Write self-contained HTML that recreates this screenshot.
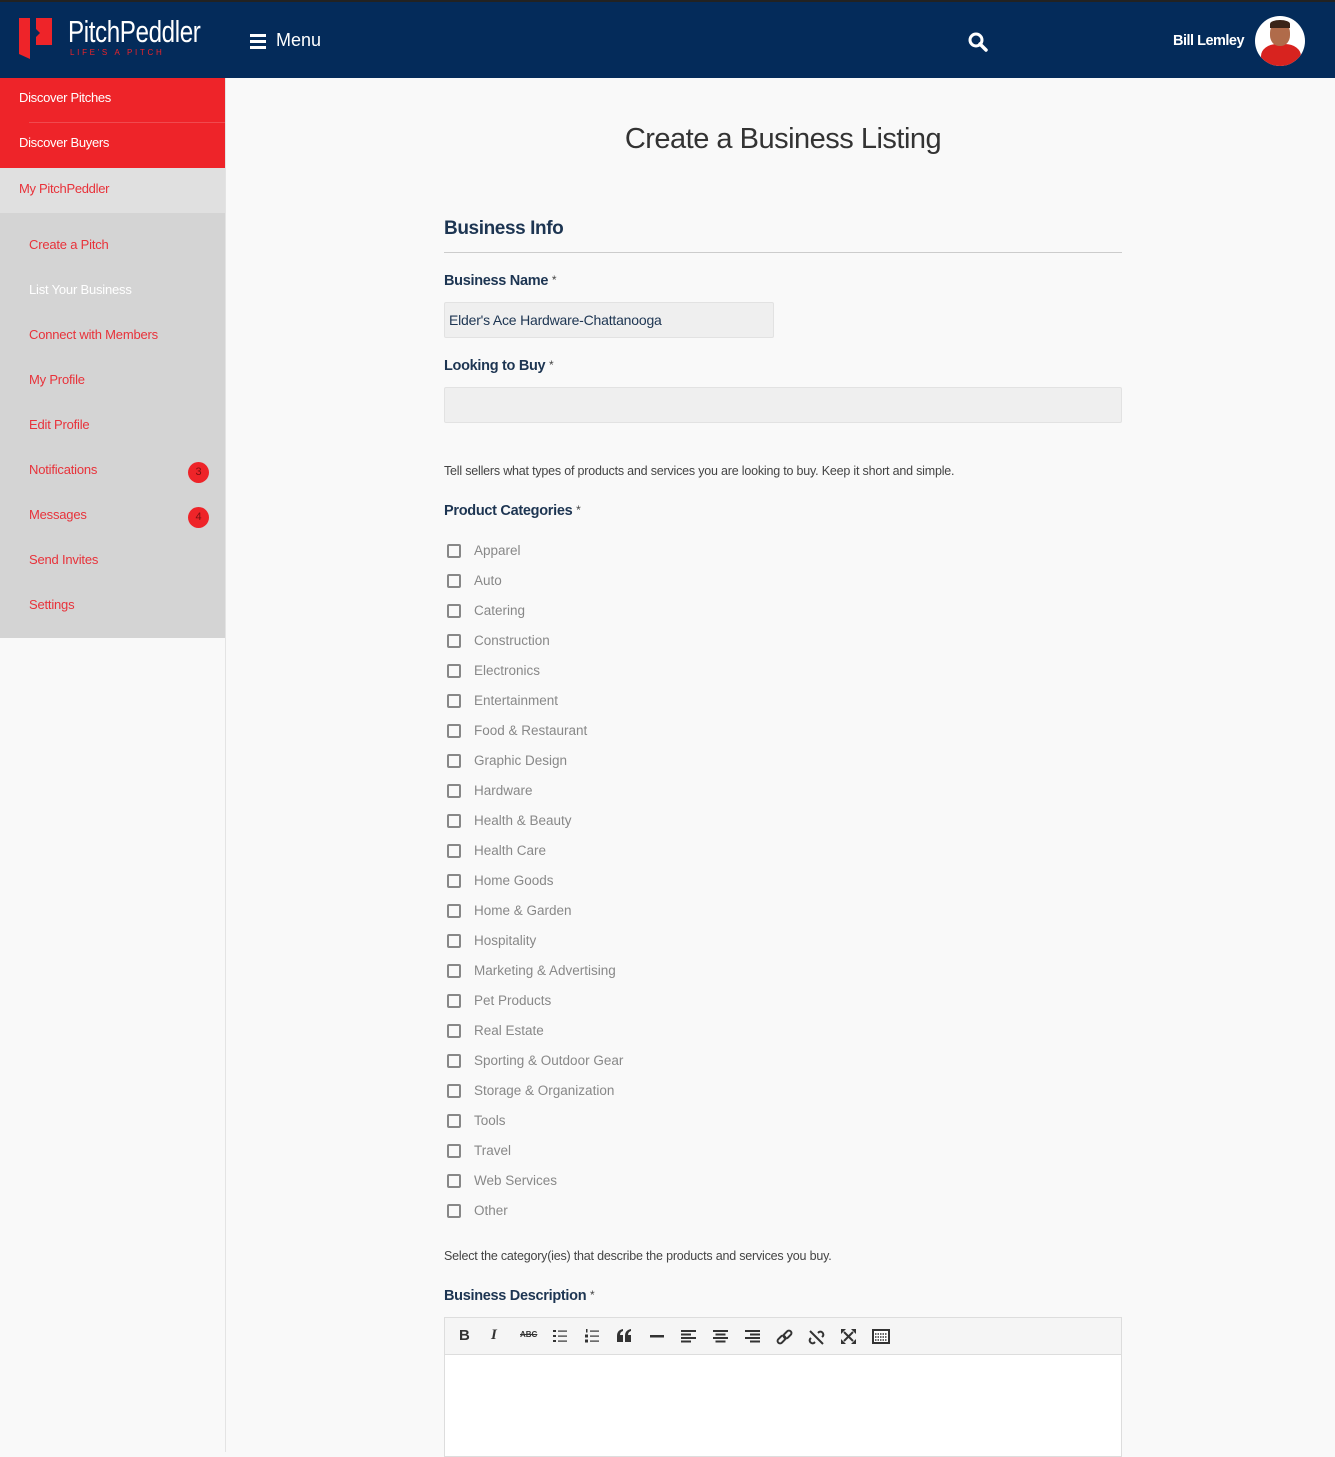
<!DOCTYPE html>
<html><head><meta charset="utf-8"><style>
*{box-sizing:border-box;margin:0;padding:0}
body{width:1335px;height:1452px;overflow:hidden;background:#f9f9f9;font-family:"Liberation Sans",sans-serif;position:relative}
.hdr{position:absolute;left:0;top:0;width:1335px;height:78px;background:#042b5a;border-top:2px solid #222}
.side{position:absolute;left:0;top:78px;width:226px;height:1374px;border-right:1px solid #e4e4e4;background:#f9f9f9}
.red{background:#ee2429;color:#fff;font-size:13px;height:45px;line-height:39px;padding-left:19px;position:relative;letter-spacing:-0.3px}
.red.a:after{content:"";position:absolute;left:29px;right:0;bottom:0;height:1px;background:#f04a4e}
.my{background:#e0e0e0;color:#e8323a;font-size:13px;height:45px;line-height:42px;padding-left:19px;letter-spacing:-0.3px}
.sub{background:#d4d4d4;height:425px;padding-top:9px}
.sub div{height:45px;line-height:45px;padding-left:29px;color:#e8323a;font-size:13px;position:relative;letter-spacing:-0.2px}
.sub div.w{color:#fff}
.badge{position:absolute;left:188px;top:15px;width:21px;height:21px;border-radius:50%;background:#ee2429;color:#7a1010;font-size:11px;line-height:21px;text-align:center}
h1{position:absolute;left:226px;width:1114px;top:123px;text-align:center;font-weight:normal;font-size:29px;color:#333;letter-spacing:-0.5px}
.main{position:absolute;left:444px;width:678px;top:0}
.lbl{position:absolute;font-weight:bold;font-size:14.5px;color:#1d3552;letter-spacing:-0.3px}
.lbl span{color:#444;font-weight:normal;font-size:12px;vertical-align:top}
.inp{position:absolute;background:#efefef;border:1px solid #e2e2e2;border-radius:2px;height:36px}
.help{position:absolute;font-size:12.5px;color:#444;letter-spacing:-0.2px}
.cb{position:absolute;left:3px;font-size:13.5px;color:#888}
.cb i{position:absolute;left:0;top:1px;width:14px;height:14px;border:2px solid #888;border-radius:2px}
.cb b{font-weight:normal;position:absolute;left:27px;top:0;white-space:nowrap}
.tb svg{position:absolute;top:11px}
</style></head><body>
<div class="hdr">
<svg style="position:absolute;left:19px;top:15px" width="34" height="42" viewBox="0 0 34 42"><path d="M0 1h11v41L0 37z" fill="#ee2429"/><path d="M17 1h16v27H17v-8l4-4-4-4z" fill="#ee2429"/></svg>
<div style="position:absolute;left:68px;top:12px;color:#fff;font-size:31px;letter-spacing:-0.5px;transform:scaleX(0.78);transform-origin:left">PitchPeddler</div>
<div style="position:absolute;left:70px;top:46px;color:#ee2429;font-size:8px;letter-spacing:2.7px">LIFE'S A PITCH</div>
<div style="position:absolute;left:250px;top:32px;width:16px"><div style="height:3px;background:#fff;margin-bottom:3px"></div><div style="height:3px;background:#fff;margin-bottom:3px"></div><div style="height:3px;background:#fff"></div></div>
<div style="position:absolute;left:276px;top:28px;color:#fff;font-size:18px">Menu</div>
<svg style="position:absolute;left:968px;top:30px" width="20" height="20" viewBox="0 0 20 20"><circle cx="8" cy="8" r="6" stroke="#fff" stroke-width="3" fill="none"/><path d="M12 12l6 6" stroke="#fff" stroke-width="3.5" stroke-linecap="round"/></svg>
<div style="position:absolute;left:1173px;top:31px;color:#fff;font-size:14.5px;font-weight:bold;letter-spacing:-0.5px">Bill Lemley</div>
<div style="position:absolute;left:1255px;top:14px;width:50px;height:50px;border-radius:50%;background:#fff;overflow:hidden"><div style="position:absolute;left:6px;top:28px;width:40px;height:30px;border-radius:40% 40% 0 0;background:#d8231f"></div><div style="position:absolute;left:15px;top:6px;width:20px;height:24px;border-radius:45%;background:#b06b4a"></div><div style="position:absolute;left:15px;top:4px;width:20px;height:8px;border-radius:50% 50% 0 0;background:#3a2418"></div></div>
</div>
<div class="side">
<div class="red a">Discover Pitches</div>
<div class="red">Discover Buyers</div>
<div class="my">My PitchPeddler</div>
<div class="sub">
<div>Create a Pitch</div><div class="w">List Your Business</div><div>Connect with Members</div><div>My Profile</div><div>Edit Profile</div>
<div>Notifications<span class="badge">3</span></div><div>Messages<span class="badge">4</span></div><div>Send Invites</div><div>Settings</div>
</div></div>
<h1>Create a Business Listing</h1>
<div class="main">
<div style="position:absolute;top:218px;font-size:19px;font-weight:bold;color:#1d3552;letter-spacing:-0.4px">Business Info</div>
<div style="position:absolute;top:252px;width:678px;height:1px;background:#ccc"></div>
<div class="lbl" style="top:273px">Business Name <span>*</span></div>
<div class="inp" style="top:302px;width:330px;font-size:14px;color:#1d3552;padding:9px 4px;letter-spacing:-0.2px">Elder's Ace Hardware-Chattanooga</div>
<div class="lbl" style="top:358px">Looking to Buy <span>*</span></div>
<div class="inp" style="top:387px;width:678px"></div>
<div class="help" style="top:464px">Tell sellers what types of products and services you are looking to buy. Keep it short and simple.</div>
<div class="lbl" style="top:503px">Product Categories <span>*</span></div>
<div class="cb" style="top:543px"><i></i><b>Apparel</b></div>
<div class="cb" style="top:573px"><i></i><b>Auto</b></div>
<div class="cb" style="top:603px"><i></i><b>Catering</b></div>
<div class="cb" style="top:633px"><i></i><b>Construction</b></div>
<div class="cb" style="top:663px"><i></i><b>Electronics</b></div>
<div class="cb" style="top:693px"><i></i><b>Entertainment</b></div>
<div class="cb" style="top:723px"><i></i><b>Food &amp; Restaurant</b></div>
<div class="cb" style="top:753px"><i></i><b>Graphic Design</b></div>
<div class="cb" style="top:783px"><i></i><b>Hardware</b></div>
<div class="cb" style="top:813px"><i></i><b>Health &amp; Beauty</b></div>
<div class="cb" style="top:843px"><i></i><b>Health Care</b></div>
<div class="cb" style="top:873px"><i></i><b>Home Goods</b></div>
<div class="cb" style="top:903px"><i></i><b>Home &amp; Garden</b></div>
<div class="cb" style="top:933px"><i></i><b>Hospitality</b></div>
<div class="cb" style="top:963px"><i></i><b>Marketing &amp; Advertising</b></div>
<div class="cb" style="top:993px"><i></i><b>Pet Products</b></div>
<div class="cb" style="top:1023px"><i></i><b>Real Estate</b></div>
<div class="cb" style="top:1053px"><i></i><b>Sporting &amp; Outdoor Gear</b></div>
<div class="cb" style="top:1083px"><i></i><b>Storage &amp; Organization</b></div>
<div class="cb" style="top:1113px"><i></i><b>Tools</b></div>
<div class="cb" style="top:1143px"><i></i><b>Travel</b></div>
<div class="cb" style="top:1173px"><i></i><b>Web Services</b></div>
<div class="cb" style="top:1203px"><i></i><b>Other</b></div>
<div class="help" style="top:1249px">Select the category(ies) that describe the products and services you buy.</div>
<div class="lbl" style="top:1288px">Business Description <span>*</span></div>
<div style="position:absolute;top:1317px;width:678px;height:140px;border:1px solid #ddd;background:#fff">
<div class="tb" style="height:37px;background:#f5f5f5;border-bottom:1px solid #ddd;position:relative;color:#333">
<span style="position:absolute;left:14px;top:9px;font-weight:bold;font-size:15px">B</span>
<span style="position:absolute;left:46px;top:9px;font-style:italic;font-weight:bold;font-size:15px;font-family:'Liberation Serif',serif">I</span>
<span style="position:absolute;left:75px;top:12px;font-size:8px;font-weight:bold;text-decoration:line-through">ABC</span>
<svg style="left:108px" width="14" height="14" viewBox="0 0 14 14" fill="#333"><rect x="0" y="1" width="3" height="2"/><rect x="0" y="6" width="3" height="2"/><rect x="0" y="11" width="3" height="2"/><rect x="5" y="1.5" width="9" height="1.2"/><rect x="5" y="6.5" width="9" height="1.2"/><rect x="5" y="11.5" width="9" height="1.2"/></svg>
<svg style="left:140px" width="14" height="14" viewBox="0 0 14 14" fill="#333"><rect x="1" y="0" width="1.5" height="3.5"/><rect x="0" y="5.5" width="3" height="3"/><rect x="0" y="10.5" width="3" height="3"/><rect x="5" y="1.5" width="9" height="1.2"/><rect x="5" y="6.5" width="9" height="1.2"/><rect x="5" y="11.5" width="9" height="1.2"/></svg>
<svg style="left:172px" width="15" height="13" viewBox="0 0 15 13" fill="#333"><path d="M0 7q0-6 6-7v2q-3 1-3 4h3v7H0zM8 7q0-6 6-7v2q-3 1-3 4h3v7H8z"/></svg>
<svg style="left:205px" width="14" height="14" viewBox="0 0 14 14" fill="#333"><rect x="0" y="6" width="14" height="2.5"/></svg>
<svg style="left:236px" width="15" height="14" viewBox="0 0 15 14" fill="#333"><rect y="1" width="15" height="2"/><rect y="4.5" width="10" height="2"/><rect y="8" width="15" height="2"/><rect y="11.5" width="10" height="2"/></svg>
<svg style="left:268px" width="15" height="14" viewBox="0 0 15 14" fill="#333"><rect y="1" width="15" height="2"/><rect x="2.5" y="4.5" width="10" height="2"/><rect y="8" width="15" height="2"/><rect x="2.5" y="11.5" width="10" height="2"/></svg>
<svg style="left:300px" width="15" height="14" viewBox="0 0 15 14" fill="#333"><rect y="1" width="15" height="2"/><rect x="5" y="4.5" width="10" height="2"/><rect y="8" width="15" height="2"/><rect x="5" y="11.5" width="10" height="2"/></svg>
<svg style="left:331px" width="17" height="17" viewBox="0 0 17 17" fill="none" stroke="#333" stroke-width="2"><rect x="1" y="8" width="9" height="5" rx="2.5" transform="rotate(-45 5.5 10.5)"/><rect x="7" y="3" width="9" height="5" rx="2.5" transform="rotate(-45 11.5 5.5)"/></svg>
<svg style="left:363px" width="17" height="17" viewBox="0 0 17 17" fill="none" stroke="#333" stroke-width="2"><path d="M3 9l-1 1a3 3 0 004 4l1-1M14 8l1-1a3 3 0 00-4-4l-1 1M2 2l13 13" /></svg>
<svg style="left:396px" width="15" height="15" viewBox="0 0 15 15" fill="#333"><path d="M0 0h5L0 5zM15 0v5l-5-5zM0 15v-5l5 5zM15 15h-5l5-5z"/><path d="M3 3l9 9M12 3l-9 9" stroke="#333" stroke-width="2"/></svg>
<svg style="left:427px" width="18" height="15" viewBox="0 0 18 15"><rect x="1" y="1" width="16" height="13" fill="#fff" stroke="#333" stroke-width="2"/><path d="M3 5h12M3 8h12M3 11h12" stroke="#333" stroke-width="1.5" stroke-dasharray="1.5 1"/></svg>
</div></div>
</div>
</body></html>
